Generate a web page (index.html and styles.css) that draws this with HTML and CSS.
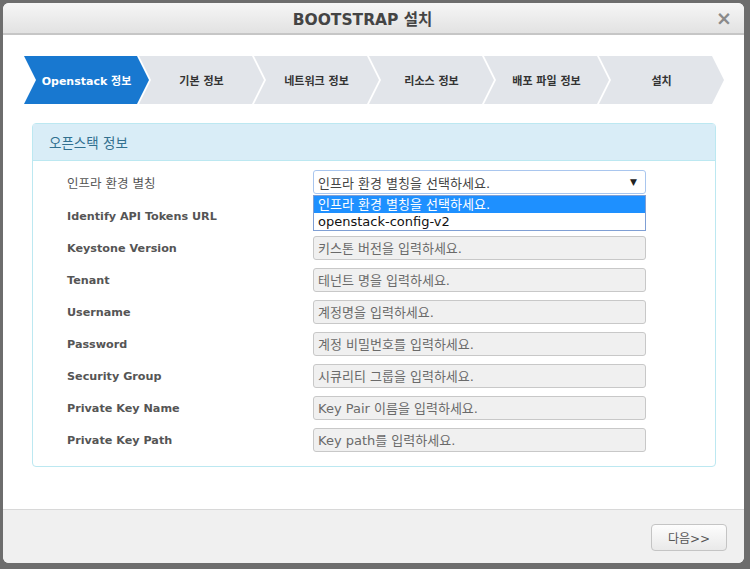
FILE: index.html
```html
<!DOCTYPE html>
<html lang="ko">
<head>
  <meta charset="UTF-8" />
  <title>BOOTSTRAP 설치</title>
  <link rel="stylesheet" href="styles.css">
</head>
<body>

  <div class="modal">
    <div class="modal-header">
      <h1>BOOTSTRAP 설치</h1>
      <span class="close">&times;</span>
    </div>

    <div class="modal-body">
      <ul class="steps">
        <li class="active">Openstack 정보</li>
        <li>기본 정보</li>
        <li>네트워크 정보</li>
        <li>리소스 정보</li>
        <li>배포 파일 정보</li>
        <li>설치</li>
      </ul>

      <div class="panel">
        <div class="panel-heading">오픈스택 정보</div>
        <form class="panel-body">
          <label class="kor first">인프라 환경 별칭</label>
          <div class="select-wrap first">
            <div class="select">인프라 환경 별칭을 선택하세요.<span class="caret">▼</span></div>
            <ul class="dropdown">
              <li class="selected">인프라 환경 별칭을 선택하세요.</li>
              <li>openstack-config-v2</li>
            </ul>
          </div>

          <label>Identify API Tokens URL</label>
          <input type="text" placeholder="Identify API Tokens URL을 입력하세요." />

          <label>Keystone Version</label>
          <input type="text" placeholder="키스톤 버전을 입력하세요." />

          <label>Tenant</label>
          <input type="text" placeholder="테넌트 명을 입력하세요." />

          <label>Username</label>
          <input type="text" placeholder="계정명을 입력하세요." />

          <label>Password</label>
          <input type="text" placeholder="계정 비밀번호를 입력하세요." />

          <label>Security Group</label>
          <input type="text" placeholder="시큐리티 그룹을 입력하세요." />

          <label>Private Key Name</label>
          <input type="text" placeholder="Key Pair 이름을 입력하세요." />

          <label>Private Key Path</label>
          <input type="text" placeholder="Key path를 입력하세요." />
        </form>
      </div>
    </div>

    <div class="modal-footer">
      <button type="button">다음&gt;&gt;</button>
    </div>
  </div>

</body>
</html>
```

FILE: styles.css
```css
body {
  margin: 0;
  padding: 3px;
  height: 563px;
  overflow: hidden;
  background: #6d6d6d;
  font-family: 'DejaVu Sans', 'Noto Sans CJK KR', sans-serif;
  color: #333;
}

.modal {
  width: 741px;
  height: 560px;
  background: #fff;
  border-radius: 6px;
  overflow: hidden;
  display: flex;
  flex-direction: column;
}

.modal-header {
  position: relative;
  height: 30px;
  padding-right: 22px;
  background: linear-gradient(#f6f6f6, #e2e2e2);
  border-bottom: 2px solid #c6c6c6;
  display: flex;
  align-items: center;
  justify-content: center;
}

.modal-header h1 {
  margin: 0;
  font-size: 15.5px;
  font-weight: bold;
  color: #444;
}

.close {
  position: absolute;
  right: 12px;
  top: 5px;
  font-size: 19px;
  line-height: 20px;
  font-weight: bold;
  color: #8a8a8a;
}

.modal-body {
  flex: 1;
  padding: 21px 0 0 21px;
}

.steps {
  list-style: none;
  margin: 0;
  padding: 0;
  display: flex;
  height: 48px;
}

.steps li {
  width: 127px;
  flex: none;
  margin-left: -12px;
  background: #e2e5ea;
  clip-path: polygon(0 0, 113px 0, 125px 50%, 113px 100%, 0 100%, 12px 50%);
  display: flex;
  align-items: center;
  justify-content: center;
  padding: 0 14px 0 12px;
  box-sizing: border-box;
  font-size: 11px;
  font-weight: bold;
  color: #333;
}

.steps li:first-child {
  margin-left: 0;
}

.steps li.active {
  background: #1878d0;
  color: #fff;
}

.panel {
  margin: 19px 0 0 8px;
  width: 684px;
  border: 1px solid #bce8f1;
  border-radius: 4px;
  box-sizing: border-box;
}

.panel-heading {
  height: 37px;
  background: #d9edf7;
  border-bottom: 1px solid #bce8f1;
  box-sizing: border-box;
  padding-left: 16px;
  display: flex;
  align-items: center;
  font-size: 13.5px;
  color: #31708f;
}

.panel-body {
  display: grid;
  grid-template-columns: 246px 333px;
  grid-template-rows: 26px;
  grid-auto-rows: 24px;
  row-gap: 8px;
  padding: 9px 0 14px 34px;
}

.panel-body .first {
  align-self: start;
  height: 24px;
}

.panel-body label {
  display: flex;
  align-items: center;
  font-size: 11.2px;
  font-weight: bold;
  color: #555;
}

.panel-body label.kor {
  font-weight: normal;
  font-size: 12.5px;
}

.panel-body input {
  margin: 0;
  height: 24px;
  box-sizing: border-box;
  border: 1px solid #c8c8c8;
  border-radius: 3px;
  background: #f0f0f0;
  padding: 0 4px;
  font-family: 'DejaVu Sans', 'Noto Sans CJK KR', sans-serif;
  font-size: 13px;
}

.panel-body input::placeholder {
  color: #6a6a6a;
}

.select-wrap {
  position: relative;
}

.select {
  height: 24px;
  box-sizing: border-box;
  border: 1px solid #a9c6ee;
  border-radius: 3px;
  background: #fff;
  padding: 0 4px;
  display: flex;
  align-items: center;
  font-size: 13px;
  color: #444;
}

.caret {
  margin-left: auto;
  margin-right: 4px;
  font-size: 9px;
  color: #222;
}

.dropdown {
  position: absolute;
  top: 25px;
  left: 0;
  width: 333px;
  box-sizing: border-box;
  margin: 0;
  padding: 0;
  list-style: none;
  background: #fff;
  border: 1px solid #7f9fd4;
  z-index: 2;
}

.dropdown li {
  height: 17px;
  line-height: 17px;
  padding-left: 4px;
  font-size: 13px;
  color: #111;
}

.dropdown li.selected {
  background: #1e90ff;
  color: #fff;
}

.modal-footer {
  height: 53px;
  background: #f0f0f0;
  border-top: 1px solid #d8d8d8;
  display: flex;
  align-items: center;
  justify-content: flex-end;
  padding-right: 17px;
}

.modal-footer button {
  width: 76px;
  height: 27px;
  margin-top: 1px;
  border: 1px solid #c4c4c4;
  border-radius: 4px;
  background: linear-gradient(#fdfdfd, #e9e9e9);
  font-family: 'DejaVu Sans', 'Noto Sans CJK KR', sans-serif;
  font-size: 12px;
  color: #555;
  cursor: pointer;
}
```
